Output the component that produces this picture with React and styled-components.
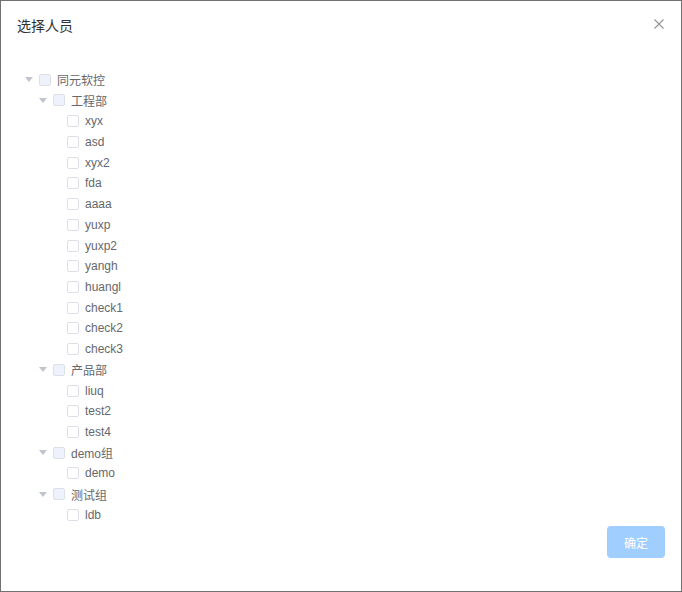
import React from "react";
import styled, { createGlobalStyle } from "styled-components";

const Global = createGlobalStyle`
  html, body { margin: 0; padding: 0; background: #fff; }
  body { font-family: "Liberation Sans", Arial, "Noto Sans CJK SC", sans-serif; }
  * { box-sizing: border-box; }
`;

const Dialog = styled.div`
  width: 682px;
  height: 592px;
  border: 1px solid #707070;
  background: #fff;
  display: flex;
  flex-direction: column;
  position: relative;
`;

const Header = styled.div`
  display: flex;
  justify-content: space-between;
  align-items: flex-start;
  padding: 14px 17px 0 16px;
  height: 46px;
`;

const Title = styled.span`
  font-size: 14px;
  line-height: 20px;
  color: #303133;
  font-family: "Noto Sans CJK SC", sans-serif;
`;

const Close = styled.button`
  border: 0;
  background: none;
  padding: 0;
  margin-top: 4px;
  width: 10px;
  height: 10px;
  display: flex;
  cursor: pointer;
`;

const Body = styled.div`
  padding: 22.4px 20px 0 21px;
  flex: 1;
`;

const Row = styled.div`
  display: flex;
  align-items: center;
  height: 20.72px;
  padding-left: ${(p) => p.$level * 14}px;
  white-space: nowrap;
`;

const Arrow = styled.span`
  width: 17px;
  height: 100%;
  display: flex;
  align-items: center;
  padding-left: 3px;
  &::before {
    content: "";
    display: ${(p) => (p.$leaf ? "none" : "block")};
    width: 0;
    height: 0;
    border-left: 4px solid transparent;
    border-right: 4px solid transparent;
    border-top: 5px solid #c0c4cc;
  }
`;

const Box = styled.span`
  width: 12px;
  height: 12px;
  border: 1px solid #dcdfe6;
  border-radius: 2px;
  background: ${(p) => (p.$parent ? "#edf2fc" : "#fff")};
  margin-right: 6px;
  flex: none;
`;

const Label = styled.span`
  font-size: 12px;
  color: #66686c;
  font-family: "Liberation Sans", Arial, "Noto Sans CJK SC", sans-serif;
`;

const Footer = styled.div`
  display: flex;
  justify-content: flex-end;
  padding: 0 16px 33px;
`;

const Button = styled.button`
  width: 58px;
  height: 32px;
  border: 0;
  border-radius: 4px;
  background: #a0cfff;
  color: #fff;
  font-size: 12px;
  font-family: "Noto Sans CJK SC", sans-serif;
  cursor: not-allowed;
`;

const tree = {
  label: "同元软控",
  children: [
    {
      label: "工程部",
      children: ["xyx", "asd", "xyx2", "fda", "aaaa", "yuxp", "yuxp2", "yangh", "huangl", "check1", "check2", "check3"],
    },
    { label: "产品部", children: ["liuq", "test2", "test4"] },
    { label: "demo组", children: ["demo"] },
    { label: "测试组", children: ["ldb"] },
  ],
};

function flatten(node, level, out) {
  if (typeof node === "string") {
    out.push({ label: node, level, leaf: true });
    return out;
  }
  out.push({ label: node.label, level, leaf: false });
  node.children.forEach((c) => flatten(c, level + 1, out));
  return out;
}

export default function App() {
  const rows = flatten(tree, 0, []);
  return (
    <>
      <Global />
      <Dialog>
        <Header>
          <Title>选择人员</Title>
          <Close aria-label="关闭">
            <svg width="10" height="10" viewBox="0 0 10 10">
              <path d="M0.5 0.5 L9.5 9.5 M9.5 0.5 L0.5 9.5" stroke="#909399" strokeWidth="1.1" />
            </svg>
          </Close>
        </Header>
        <Body>
          {rows.map((r, i) => (
            <Row key={i} $level={r.level}>
              <Arrow $leaf={r.leaf} />
              <Box $parent={!r.leaf} />
              <Label>{r.label}</Label>
            </Row>
          ))}
        </Body>
        <Footer>
          <Button>确定</Button>
        </Footer>
      </Dialog>
    </>
  );
}
